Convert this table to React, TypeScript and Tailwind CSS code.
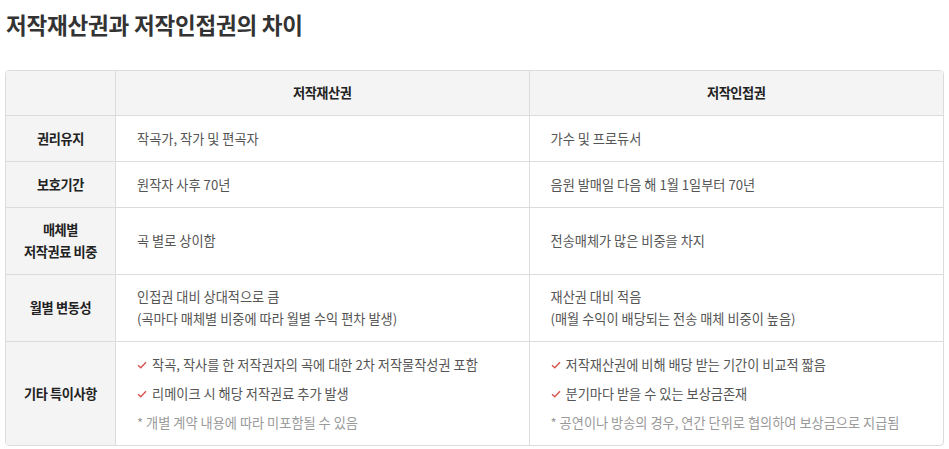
const rows: { label: string[]; a: string[]; b: string[]; h: string }[] = [
  { label: ["권리유지"], a: ["작곡가, 작가 및 편곡자"], b: ["가수 및 프로듀서"], h: "h-[46px]" },
  { label: ["보호기간"], a: ["원작자 사후 70년"], b: ["음원 발매일 다음 해 1월 1일부터 70년"], h: "h-[46px]" },
  { label: ["매체별", "저작권료 비중"], a: ["곡 별로 상이함"], b: ["전송매체가 많은 비중을 차지"], h: "h-[67px]" },
  {
    label: ["월별 변동성"],
    a: ["인접권 대비 상대적으로 큼", "(곡마다 매체별 비중에 따라 월별 수익 편차 발생)"],
    b: ["재산권 대비 적음", "(매월 수익이 배당되는 전송 매체 비중이 높음)"],
    h: "h-[67px]",
  },
];

function Check() {
  return (
    <svg width="10" height="8" viewBox="0 0 10 8" className="mr-[5px] shrink-0">
      <path d="M1 4.2 L3.8 6.8 L9 1.2" fill="none" stroke="#d9534f" strokeWidth="1.4" />
    </svg>
  );
}

function Extra({ items, note }: { items: string[]; note: string }) {
  return (
    <div className="flex flex-col justify-center gap-[9px] pl-[21px]">
      {items.map((t) => (
        <div key={t} className="flex items-center text-[#555] h-[20px]">
          <Check />
          {t}
        </div>
      ))}
      <div className="text-[#999] h-[20px] flex items-center">{note}</div>
    </div>
  );
}

export default function App() {
  return (
    <div
      className="w-[949px] h-[449px] bg-white px-[5px] pt-[9px] text-[13.2px]"
      style={{ fontFamily: '"Noto Sans CJK KR", "Noto Sans", sans-serif' }}
    >
      <h1 className="text-[22.5px] font-bold text-[#333] leading-[31px] pl-px tracking-[-0.2px]">
        저작재산권과 저작인접권의 차이
      </h1>
      <div className="mt-[30px] border border-[#dcdcdc] rounded-[4px] overflow-hidden grid grid-cols-[110px_1fr_1fr]">
        <div className="h-[45px] bg-[#f4f4f4] border-r border-b border-[#dcdcdc]" />
        <div className="h-[45px] bg-[#f4f4f4] border-r border-b border-[#dcdcdc] flex items-center justify-center font-bold text-[#222] tracking-[-0.4px]">
          저작재산권
        </div>
        <div className="h-[45px] bg-[#f4f4f4] border-b border-[#dcdcdc] flex items-center justify-center font-bold text-[#222] tracking-[-0.4px]">
          저작인접권
        </div>
        {rows.map((r) => (
          <div key={r.label.join()} className="contents">
            <div
              className={`${r.h} bg-[#f4f4f4] border-r border-b border-[#dcdcdc] flex flex-col items-center justify-center font-bold text-[#222] leading-[22px] tracking-[-0.4px]`}
            >
              {r.label.map((l) => (
                <div key={l}>{l}</div>
              ))}
            </div>
            <div
              className={`${r.h} border-r border-b border-[#dcdcdc] flex flex-col justify-center pl-[21px] text-[#555] leading-[22px]`}
            >
              {r.a.map((l) => (
                <div key={l}>{l}</div>
              ))}
            </div>
            <div
              className={`${r.h} border-b border-[#dcdcdc] flex flex-col justify-center pl-[21px] text-[#555] leading-[22px]`}
            >
              {r.b.map((l) => (
                <div key={l}>{l}</div>
              ))}
            </div>
          </div>
        ))}
        <div className="h-[103px] bg-[#f4f4f4] border-r border-[#dcdcdc] flex items-center justify-center font-bold text-[#222] tracking-[-0.4px]">
          기타 특이사항
        </div>
        <div className="h-[103px] border-r border-[#dcdcdc] flex">
          <Extra
            items={["작곡, 작사를 한 저작권자의 곡에 대한 2차 저작물작성권 포함", "리메이크 시 해당 저작권료 추가 발생"]}
            note="* 개별 계약 내용에 따라 미포함될 수 있음"
          />
        </div>
        <div className="h-[103px] flex">
          <Extra
            items={["저작재산권에 비해 배당 받는 기간이 비교적 짧음", "분기마다 받을 수 있는 보상금존재"]}
            note="* 공연이나 방송의 경우, 연간 단위로 협의하여 보상금으로 지급됨"
          />
        </div>
      </div>
    </div>
  );
}
